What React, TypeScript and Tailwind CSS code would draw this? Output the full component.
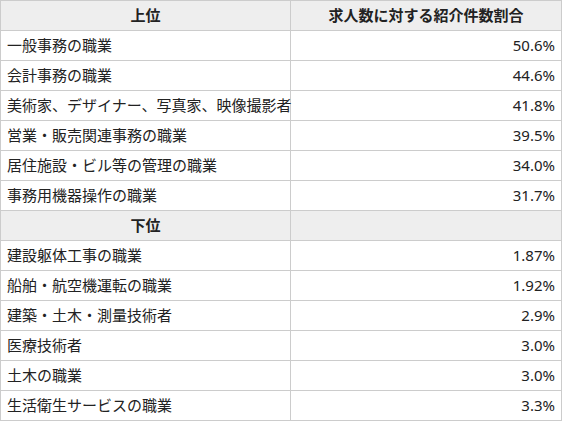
const top = [
  ["一般事務の職業", "50.6%"],
  ["会計事務の職業", "44.6%"],
  ["美術家、デザイナー、写真家、映像撮影者", "41.8%"],
  ["営業・販売関連事務の職業", "39.5%"],
  ["居住施設・ビル等の管理の職業", "34.0%"],
  ["事務用機器操作の職業", "31.7%"],
];

const bottom = [
  ["建設躯体工事の職業", "1.87%"],
  ["船舶・航空機運転の職業", "1.92%"],
  ["建築・土木・測量技術者", "2.9%"],
  ["医療技術者", "3.0%"],
  ["土木の職業", "3.0%"],
  ["生活衛生サービスの職業", "3.3%"],
];

function Row({ name, rate }: { name: string; rate: string }) {
  return (
    <tr className="h-[30px]">
      <td className="border border-[#cccccc] pl-[6px] pr-0 py-0 text-left whitespace-nowrap">{name}</td>
      <td className="border border-[#cccccc] px-[6px] py-0 text-right">{rate}</td>
    </tr>
  );
}

export default function App() {
  return (
    <div className="bg-white text-[#222222] font-['Noto_Sans','Noto_Sans_CJK_JP',sans-serif] text-[15px]">
      <table className="w-[562px] border-collapse table-fixed">
        <colgroup>
          <col className="w-[290px]" />
          <col />
        </colgroup>
        <tbody>
          <tr className="h-[30px] bg-[#eeeeee] font-bold">
            <td className="border border-[#cccccc] py-0 text-center">上位</td>
            <td className="border border-[#cccccc] py-0 text-center">求人数に対する紹介件数割合</td>
          </tr>
          {top.map(([n, r]) => (
            <Row key={n} name={n} rate={r} />
          ))}
          <tr className="h-[30px] bg-[#eeeeee] font-bold">
            <td className="border border-[#cccccc] py-0 text-center">下位</td>
            <td className="border border-[#cccccc] py-0"></td>
          </tr>
          {bottom.map(([n, r]) => (
            <Row key={n} name={n} rate={r} />
          ))}
        </tbody>
      </table>
    </div>
  );
}
